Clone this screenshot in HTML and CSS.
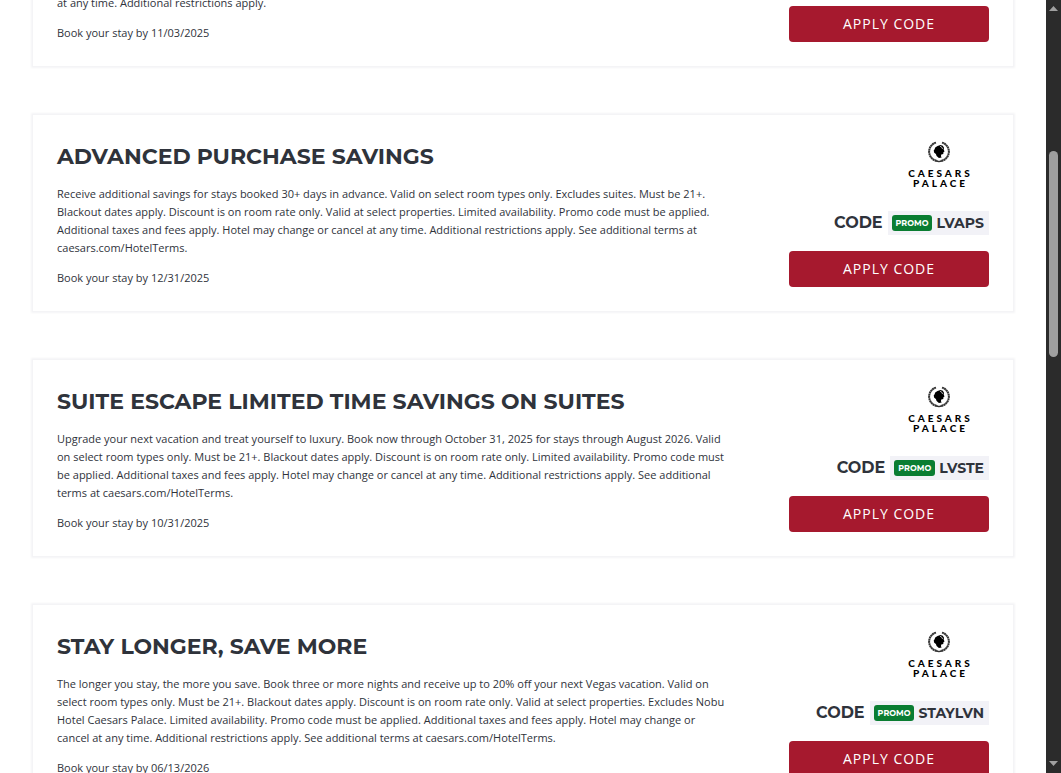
FILE: index.html
```
<!DOCTYPE html>
<html lang="en">
<head>
    <meta charset="utf-8">
    <title>Las Vegas Hotel Offers</title>
    <link rel="stylesheet" href="styles.css">
</head>
<body>
    <!-- laurel and head, shared by all cards -->
    <svg class="defs" width="0" height="0" aria-hidden="true">
        <symbol id="emblem" viewBox="0 0 22 22">
            <g fill="none" stroke="#333">
                <path d="M8 1.600A9.400 9.400 0 0 0 9.500 20" stroke-width="2" stroke-dasharray="2 .3"/>
                <path d="M14 1.600A9.400 9.400 0 0 1 12.500 20" stroke-width="2" stroke-dasharray="2 .3"/>
                <path d="M8 19.800q3 1.500 6 0" stroke-width="1.500"/>
            </g>
            <path d="M9.500 5l3-1 2.300.8 1.200 2-.3 1.800.8 1.900-1.100.7-.1 1.800-2 .6-.4 1.600.8 1.300-2.800.5-2.300-2-.7-2-1.700-1.300-.5-2.300.9-1.200.6-1.800z" fill="#000"/>
            <path d="M12 5.200q2.200.6 2.600 2.800" fill="none" stroke="#fff" stroke-width=".7"/>
        </symbol>
    </svg>

    <div class="page">
        <main class="offers">
            <section class="card card-first">
                <div class="info">
                    <p>at any time. Additional restrictions apply.</p>
                    <p>Book your stay by 11/03/2025</p>
                </div>
                <div class="action">
                    <button type="button" class="apply">APPLY CODE</button>
                </div>
            </section>

            <section class="card">
                <div class="info">
                    <h2>ADVANCED PURCHASE SAVINGS</h2>
                    <p>Receive additional savings for stays booked 30+ days in advance. Valid on select room types only. Excludes suites. Must be 21+. Blackout dates apply. Discount is on room rate only. Valid at select properties. Limited availability. Promo code must be applied. Additional taxes and fees apply. Hotel may change or cancel at any time. Additional restrictions apply. See additional terms at caesars.com/HotelTerms.</p>
                    <p>Book your stay by 12/31/2025</p>
                </div>
                <div class="action">
                    <div class="logo">
                        <svg class="emblem" aria-hidden="true"><use href="#emblem"/></svg>
                        <span>CAESARS</span>
                        <span>PALACE</span>
                    </div>
                    <div class="code">CODE <span class="chip"><span class="promo">PROMO</span>LVAPS</span></div>
                    <button type="button" class="apply">APPLY CODE</button>
                </div>
            </section>

            <section class="card">
                <div class="info">
                    <h2>SUITE ESCAPE LIMITED TIME SAVINGS ON SUITES</h2>
                    <p>Upgrade your next vacation and treat yourself to luxury. Book now through October 31, 2025 for stays through August 2026. Valid on select room types only. Must be 21+. Blackout dates apply. Discount is on room rate only. Limited availability. Promo code must be applied. Additional taxes and fees apply. Hotel may change or cancel at any time. Additional restrictions apply. See additional terms at caesars.com/HotelTerms.</p>
                    <p>Book your stay by 10/31/2025</p>
                </div>
                <div class="action">
                    <div class="logo">
                        <svg class="emblem" aria-hidden="true"><use href="#emblem"/></svg>
                        <span>CAESARS</span>
                        <span>PALACE</span>
                    </div>
                    <div class="code">CODE <span class="chip"><span class="promo">PROMO</span>LVSTE</span></div>
                    <button type="button" class="apply">APPLY CODE</button>
                </div>
            </section>

            <section class="card">
                <div class="info">
                    <h2>STAY LONGER, SAVE MORE</h2>
                    <p>The longer you stay, the more you save. Book three or more nights and receive up to 20% off your next Vegas vacation. Valid on select room types only. Must be 21+. Blackout dates apply. Discount is on room rate only. Valid at select properties. Excludes Nobu Hotel Caesars Palace. Limited availability. Promo code must be applied. Additional taxes and fees apply. Hotel may change or cancel at any time. Additional restrictions apply. See additional terms at caesars.com/HotelTerms.</p>
                    <p>Book your stay by 06/13/2026</p>
                </div>
                <div class="action">
                    <div class="logo">
                        <svg class="emblem" aria-hidden="true"><use href="#emblem"/></svg>
                        <span>CAESARS</span>
                        <span>PALACE</span>
                    </div>
                    <div class="code">CODE <span class="chip"><span class="promo">PROMO</span>STAYLVN</span></div>
                    <button type="button" class="apply">APPLY CODE</button>
                </div>
            </section>
        </main>

        <div class="scrollbar" aria-hidden="true">
            <svg class="arrow" viewBox="0 0 9 5"><path d="M4.500 0L9 5H0z"/></svg>
            <div class="track"><div class="thumb"></div></div>
            <svg class="arrow" viewBox="0 0 9 5"><path d="M0 0h9L4.500 5z"/></svg>
        </div>
    </div>
</body>
</html>
```

FILE: styles.css
```
* {
    box-sizing: border-box;
}
body {
    margin: 0;
    font-family: "Open Sans", sans-serif;
    font-size: 11px;
    line-height: 18px;
    color: #2f333b;
    background-color: #fff;
}
.defs {
    position: absolute;
}
.page {
    display: flex;
    height: 100vh;
    overflow: hidden;
}
.offers {
    flex: 1;
    display: flex;
    flex-direction: column;
    gap: 47px;
    padding: 0 32px;
    margin-top: -6px;
}
.card {
    display: flex;
    flex-shrink: 0;
    justify-content: space-between;
    align-items: flex-end;
    gap: 60px;
    padding: 24px;
    border: 1px solid #f4f4f6;
    box-shadow: 0 0 2px 1px #f4f4f6;
}
.card-first {
    padding-top: 0;
    border-top: none;
}
.info {
    flex: 1;
}
h2 {
    margin: 0 0 10px;
    font-family: Montserrat, Inter, sans-serif;
    font-size: 22px;
    line-height: 36px;
    font-weight: 700;
}
p {
    margin: 0 0 12px;
}
p:last-child {
    margin-bottom: 0;
}
.action {
    display: flex;
    flex-direction: column;
    align-items: flex-end;
    width: 200px;
}
.logo {
    display: flex;
    flex-direction: column;
    align-items: center;
    width: 100px;
    margin-bottom: 23px;
    font-family: Lato, sans-serif;
    font-size: 10px;
    line-height: 10px;
    font-weight: 900;
    letter-spacing: 3px;
    color: #000;
}
.logo span {
    padding-left: 3px;
}
.emblem {
    width: 22px;
    height: 22px;
    margin-bottom: 5px;
}
.code {
    display: flex;
    align-items: center;
    gap: 5px;
    height: 24px;
    margin-bottom: 16px;
    font-family: Montserrat, Inter, sans-serif;
    font-size: 16px;
    font-weight: 700;
}
.chip {
    display: flex;
    align-items: center;
    gap: 4px;
    height: 24px;
    padding: 0 5px 0 4px;
    font-size: 14px;
    background-color: #f2f2f7;
}
.promo {
    padding: 0 4px;
    border-radius: 3px;
    font-size: 8px;
    line-height: 16px;
    color: #fff;
    background-color: #0a7d32;
}
.apply {
    width: 100%;
    height: 36px;
    padding: 0 0 2px;
    border: none;
    border-radius: 4px;
    font-family: inherit;
    font-size: 14px;
    letter-spacing: 1px;
    color: #fff;
    background-color: #a6192e;
    cursor: pointer;
}
.apply:hover {
    background-color: #8c1527;
}
.scrollbar {
    display: flex;
    flex-direction: column;
    align-items: center;
    width: 15px;
    padding: 6px 0 7px;
    background-color: #2b2b2b;
}
.arrow {
    width: 9px;
    height: 5px;
    fill: #a0a0a0;
}
.track {
    flex: 1;
    width: 9px;
    padding-top: 140px;
}
.thumb {
    height: 206px;
    border-radius: 5px;
    background-color: #9f9f9f;
}
```
